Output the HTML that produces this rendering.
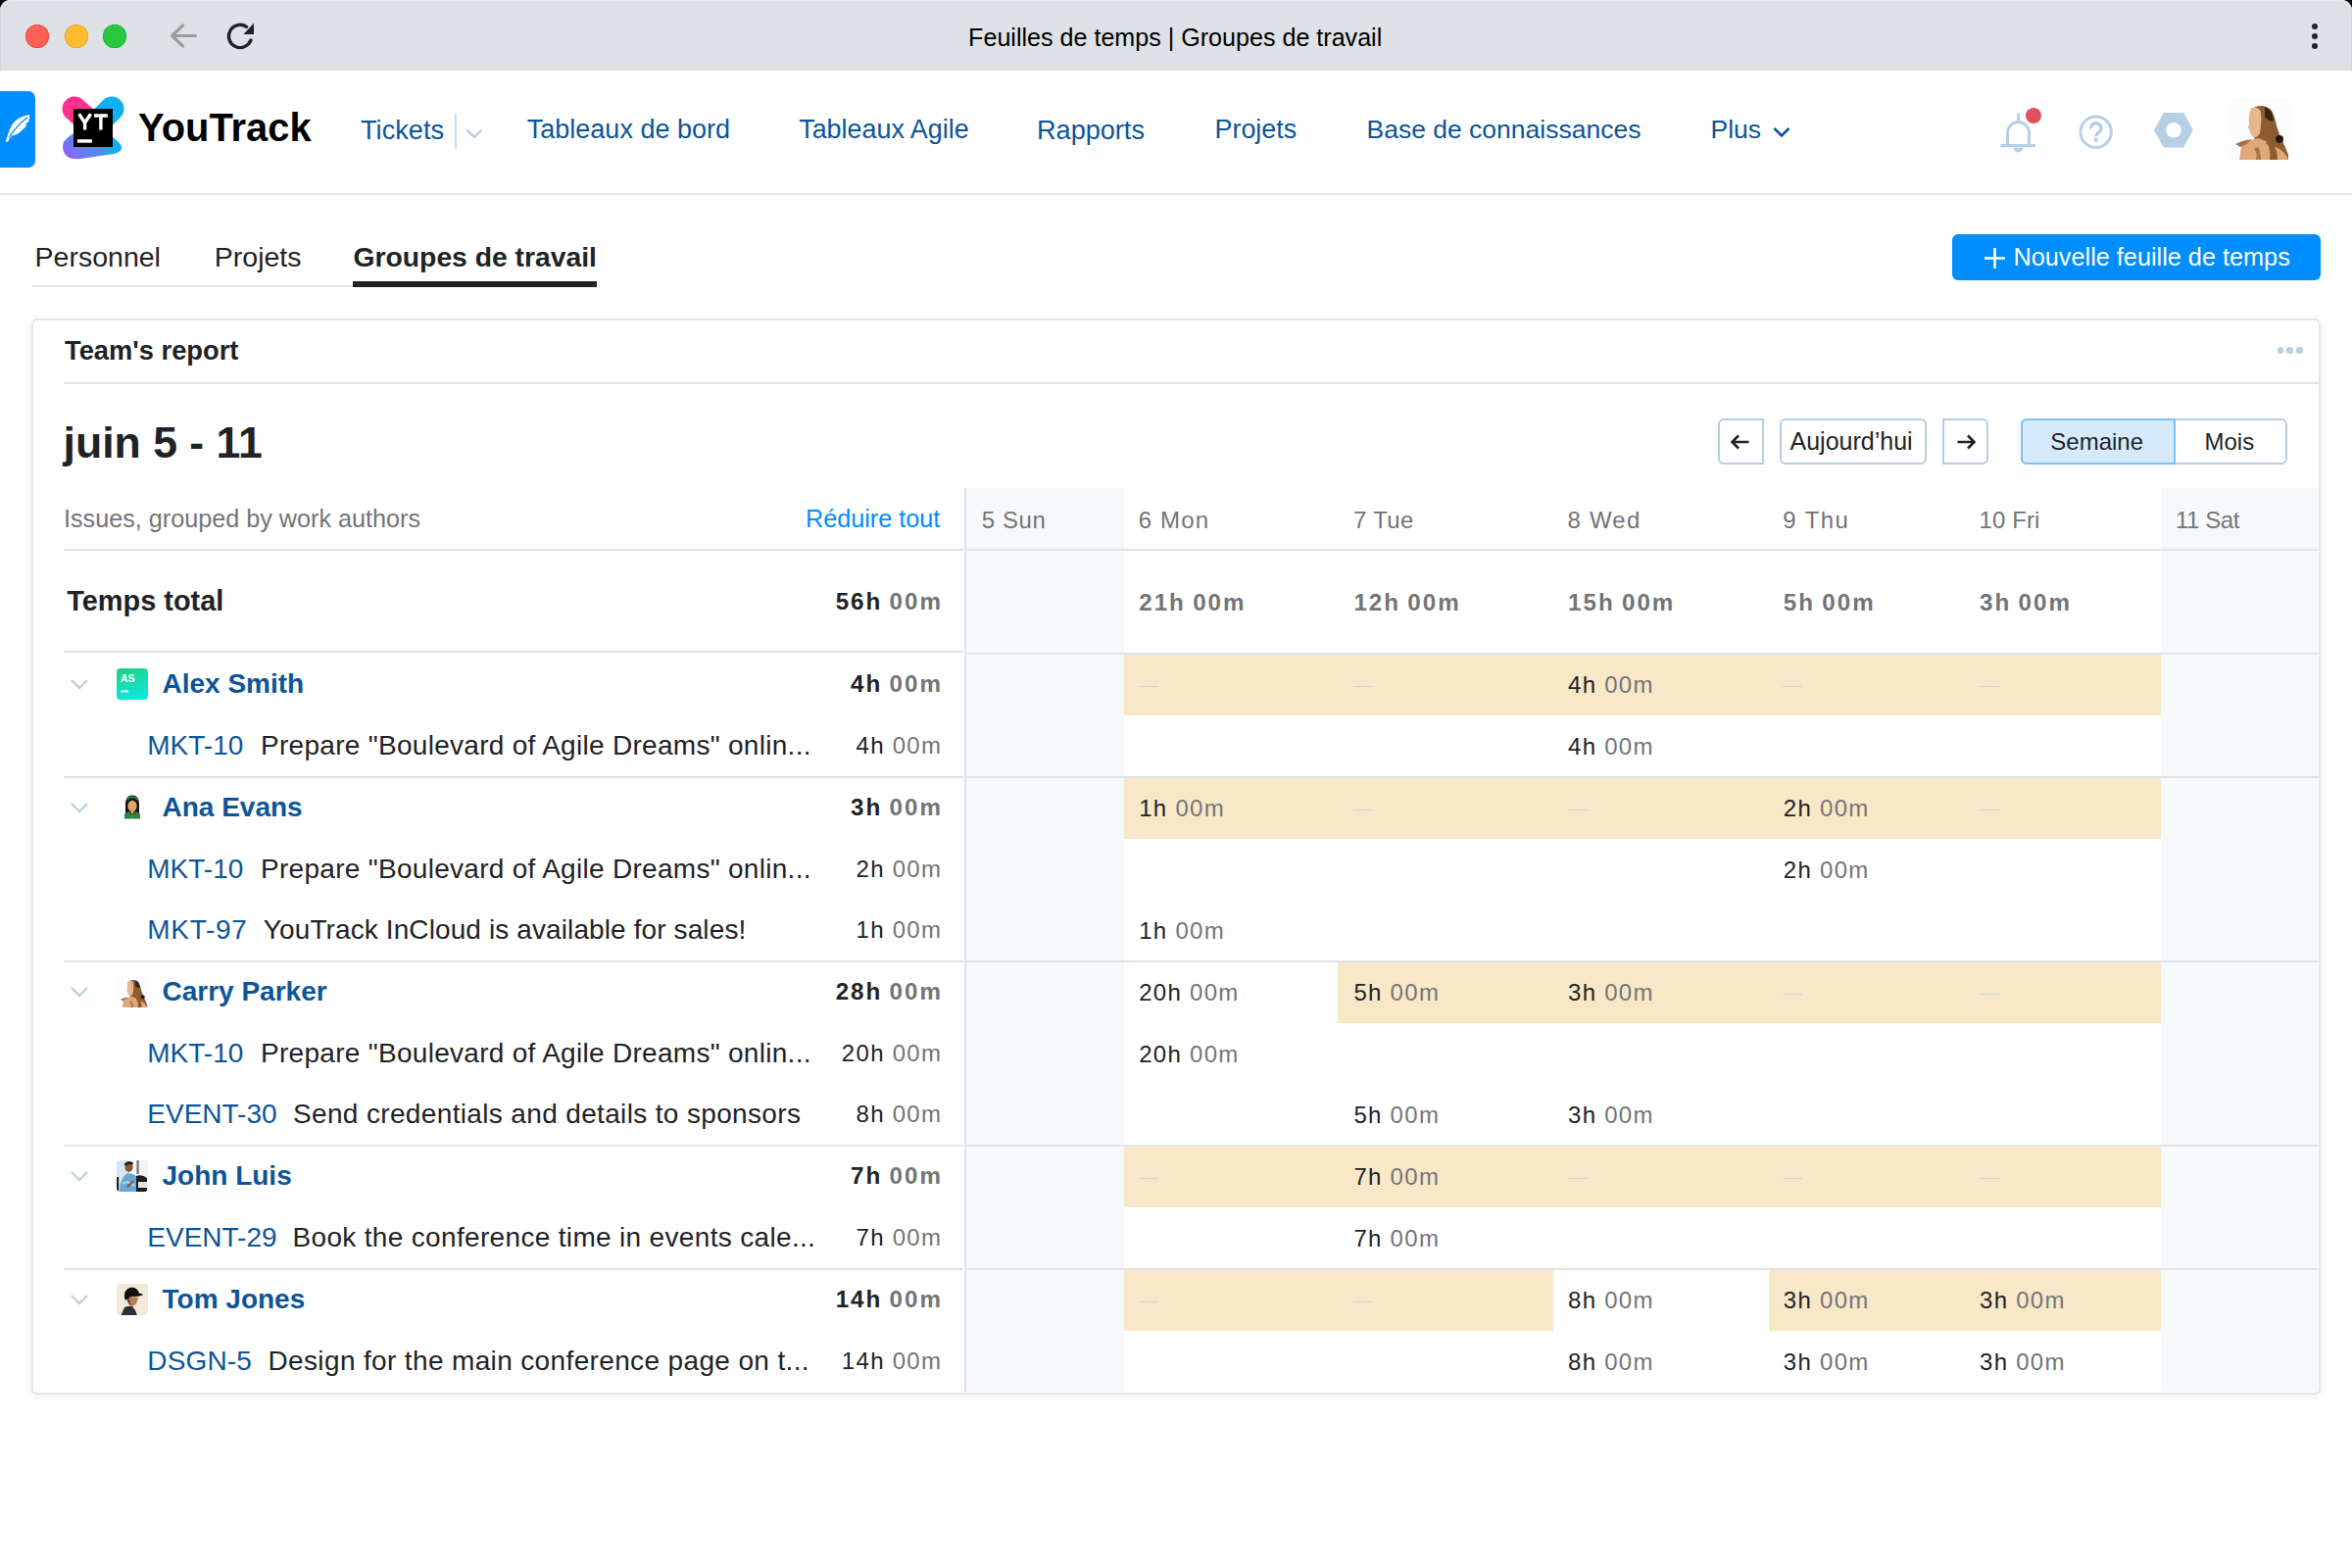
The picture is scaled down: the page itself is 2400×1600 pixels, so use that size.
<!DOCTYPE html>
<html><head><meta charset="utf-8"><title>Feuilles de temps | Groupes de travail</title>
<style>
html,body{margin:0;padding:0;width:2400px;height:1600px;overflow:hidden;background:#000;}
.t{position:absolute;white-space:nowrap;font-family:"Liberation Sans", sans-serif;}
.r{position:absolute;}
svg{display:block;}
</style></head><body>
<div class="r" style="left:0;top:0;width:2400px;height:80px;background:#dee1e6;border-radius:11px 11px 0 0;box-shadow:inset 0 1px 0 #e9eaee, inset 1px 0 0 #d5d6d9, inset -1px 0 0 #d5d6d9"></div>
<div class="r" style="left:0px;top:72px;width:2400px;height:1528px;background:#ffffff;"></div>
<div class="r" style="left:25.7px;top:24.7px;width:24.4px;height:24.4px;border-radius:50%;background:#fe5f57;box-shadow:inset 0 0 0 0.8px #e14640"></div>
<div class="r" style="left:65.6px;top:24.7px;width:24.4px;height:24.4px;border-radius:50%;background:#febc2e;box-shadow:inset 0 0 0 0.8px #dfa123"></div>
<div class="r" style="left:105.1px;top:24.7px;width:24.4px;height:24.4px;border-radius:50%;background:#28c840;box-shadow:inset 0 0 0 0.8px #1dad2b"></div>
<svg class="r" style="left:170px;top:20px" width="34" height="34" viewBox="0 0 34 34"><path d="M29.5 16.5H6.5M16.5 6L5.5 16.5L16.5 27" fill="none" stroke="#9b9c9e" stroke-width="3.2" stroke-linecap="round" stroke-linejoin="round"/></svg>
<svg class="r" style="left:226px;top:18px" width="40" height="40" viewBox="0 0 40 40"><path d="M29.9 23.1A11.6 11.6 0 1 1 25.5 9.3" fill="none" stroke="#1f2326" stroke-width="3.4" stroke-linecap="round"/><path d="M33 5.8V17H22.3Z" fill="#1f2326"/></svg>
<div class="t" style="left:1199.2px;top:26.0px;font-size:25.1px;line-height:25.1px;color:#000000;font-weight:400;transform:translateX(-50%);">Feuilles de temps | Groupes de travail</div>
<div class="r" style="left:2358.7px;top:23.6px;width:6.6px;height:6.6px;border-radius:50%;background:#1f2326"></div>
<div class="r" style="left:2358.7px;top:33.6px;width:6.6px;height:6.6px;border-radius:50%;background:#1f2326"></div>
<div class="r" style="left:2358.7px;top:43.6px;width:6.6px;height:6.6px;border-radius:50%;background:#1f2326"></div>
<div class="r" style="left:0px;top:197px;width:2400px;height:2px;background:#e3e7ec;"></div>
<div class="r" style="left:-8px;top:93px;width:44px;height:78px;border-radius:7px;background:#008eff"></div>
<svg class="r" style="left:4px;top:114px" width="30" height="34" viewBox="0 0 30 34"><path d="M26.1 3.2C18 4 11 8 8 14C6 18 4.5 21 3.5 25L1.8 30.2L3.6 31L7.9 24.6C10 24 12 23.5 13.9 22.8C18 20 21 17 23.4 13.3L21.6 12.7C23.5 11.5 24.8 10.5 25.2 10.3C26 8 26.3 5.5 26.1 3.2Z" fill="#fff"/><path d="M24.2 5.8Q14 13 5 26.5" fill="none" stroke="#008eff" stroke-width="1.3"/></svg>
<svg class="r" style="left:60px;top:96px" width="70" height="70" viewBox="0 0 70 70">
<defs><linearGradient id="lg1" x1="0" y1="1" x2="1" y2="0.3"><stop offset="0" stop-color="#9b5cff"/><stop offset="0.55" stop-color="#4b8cf5"/><stop offset="1" stop-color="#10b4f0"/></linearGradient></defs>
<path d="M16 15 L36 33" stroke="#ff318c" stroke-width="25" stroke-linecap="round"/>
<path d="M54 15 L36 33" stroke="#0fb1f3" stroke-width="25" stroke-linecap="round"/>
<path d="M44 34 L58 48 Q68 58 56 61 L22 66 Q6 68 4 55 Q3 47 14 41 L30 32 Z" fill="url(#lg1)"/>
<path d="M40 30 L62 50 Q68 57 58 60 L48 61 Z" fill="#0fb1f3"/>
<rect x="15" y="15" width="40" height="39" fill="#000"/>
<path d="M20.6 20.3L26.6 29.2M32.6 20.3L26.6 29.2V36.6M36 22H49.8M42.9 20.3V36.6" fill="none" stroke="#fff" stroke-width="3.4"/>
<rect x="19" y="46.2" width="15" height="3.5" fill="#fff"/>
</svg>
<div class="t" style="left:141.0px;top:111.2px;font-size:39.9px;line-height:39.9px;color:#000000;font-weight:700;">YouTrack</div>
<div class="t" style="left:368.0px;top:118.8px;font-size:27.2px;line-height:27.2px;color:#0d5597;font-weight:400;">Tickets</div>
<div class="r" style="left:464px;top:116px;width:2px;height:36px;background:#c9dbee;"></div>
<svg class="r" style="left:474px;top:128px" width="20" height="16" viewBox="0 0 20 16"><path d="M2.5 4.5L10 12L17.5 4.5" fill="none" stroke="#b1cbe5" stroke-width="2.2"/></svg>
<div class="t" style="left:537.8px;top:118.9px;font-size:27px;line-height:27px;color:#0d5597;font-weight:400;">Tableaux de bord</div>
<div class="t" style="left:815.2px;top:119.0px;font-size:26.9px;line-height:26.9px;color:#0d5597;font-weight:400;">Tableaux Agile</div>
<div class="t" style="left:1058.0px;top:118.9px;font-size:27.1px;line-height:27.1px;color:#0d5597;font-weight:400;">Rapports</div>
<div class="t" style="left:1239.5px;top:119.0px;font-size:26.9px;line-height:26.9px;color:#0d5597;font-weight:400;">Projets</div>
<div class="t" style="left:1394.5px;top:119.4px;font-size:26.5px;line-height:26.5px;color:#0d5597;font-weight:400;">Base de connaissances</div>
<div class="t" style="left:1745.5px;top:119.4px;font-size:26.5px;line-height:26.5px;color:#0d5597;font-weight:400;">Plus</div>
<svg class="r" style="left:1808px;top:126px" width="20" height="18" viewBox="0 0 20 18"><path d="M2.5 5L10 12.5L17.5 5" fill="none" stroke="#0d5597" stroke-width="2.6"/></svg>
<svg class="r" style="left:2036px;top:110px" width="50" height="50" viewBox="0 0 50 50">
<path d="M23.5 5.5V13" stroke="#b7cfe6" stroke-width="3"/>
<path d="M12.5 38.5V25.5A11 11 0 0 1 34.5 25.5V38.5" fill="none" stroke="#b7cfe6" stroke-width="3"/>
<path d="M5.5 38.5H41" stroke="#b7cfe6" stroke-width="3"/>
<path d="M18.5 40.5A5 5 0 0 0 28.5 40.5Z" fill="#b7cfe6"/>
</svg>
<div class="r" style="left:2067px;top:110px;width:16px;height:16px;border-radius:50%;background:#e0525e"></div>
<svg class="r" style="left:2118px;top:114px" width="42" height="42" viewBox="0 0 42 42">
<circle cx="20.7" cy="20.75" r="15.7" fill="none" stroke="#b7cfe6" stroke-width="2.9"/>
<path d="M15.5 17.3A5.2 5.2 0 1 1 24 20.9Q20.8 22.8 20.8 25.2" fill="none" stroke="#b7cfe6" stroke-width="3.3"/>
<rect x="18.9" y="26.8" width="3.8" height="3.8" fill="#b7cfe6"/>
</svg>
<svg class="r" style="left:2196px;top:113px" width="44" height="40" viewBox="0 0 44 40">
<path d="M11.8 2H32.2L41.8 19.7L32.2 37.4H11.8L2 19.7Z" fill="#b7cfe6"/>
<circle cx="22" cy="19.7" r="7.8" fill="#fff"/>
</svg>
<div class="r" style="left:2274px;top:100px;width:62px;height:63px"><svg width="62" height="63" viewBox="0 0 62 63"><rect width="62" height="63" rx="4" fill="#fbfcfd"/><path d="M22 14Q26 7 35 8Q44 9 47 20Q49 30 53 40Q58 50 61 58V63H30Z" fill="#8d5c31"/><path d="M37 9Q45 11 46 23Q41 25 37 19Z" fill="#3b2412"/><circle cx="52" cy="42" r="4" fill="#24160c"/><path d="M11 63L13 50Q20 43 30 41Q40 44 48 50Q58 54 61 63Z" fill="#dfa877"/><path d="M23 10Q30 8 33 14Q34 26 32 36Q29 41 25 40Q22 36 21 32Q19 30 21 27Q20 20 23 10Z" fill="#e9b78c"/><path d="M38 45Q44 52 42 63H50Q50 52 44 44Z" fill="#8d5c31"/><path d="M26 52Q30 56 28 63H33Q33 55 30 50Z" fill="#a87448"/><path d="M7 47Q15 43 24 42Q18 48 12 50Z" fill="#a57244"/></svg></div>
<div class="t" style="left:35.6px;top:248.1px;font-size:28.5px;line-height:28.5px;color:#1f2326;font-weight:400;">Personnel</div>
<div class="t" style="left:218.8px;top:248.1px;font-size:28.5px;line-height:28.5px;color:#1f2326;font-weight:400;">Projets</div>
<div class="t" style="left:360.5px;top:248.2px;font-size:28.3px;line-height:28.3px;color:#1f2326;font-weight:700;">Groupes de travail</div>
<div class="r" style="left:32px;top:291px;width:328px;height:2px;background:#e3e7ec;"></div>
<div class="r" style="left:360px;top:287px;width:249px;height:6px;background:#1f2326;"></div>
<div class="r" style="left:1992px;top:239px;width:376px;height:47px;border-radius:6px;background:#008eff"></div>
<svg class="r" style="left:2024px;top:252px" width="23" height="23" viewBox="0 0 23 23"><path d="M11.5 1V22M1 11.5H22" stroke="#fff" stroke-width="2.6"/></svg>
<div class="t" style="left:2054.5px;top:249.5px;font-size:25.27px;line-height:25.27px;color:#ffffff;font-weight:400;">Nouvelle feuille de temps</div>
<div class="r" style="left:32px;top:325px;width:2336px;height:1098px;border:2px solid #e1e6ec;border-radius:6px;background:#ffffff;box-sizing:border-box;box-shadow:0 2px 8px rgba(40,60,90,0.09)"></div>
<div class="t" style="left:66.0px;top:343.9px;font-size:27.3px;line-height:27.3px;color:#1f2326;font-weight:700;">Team's report</div>
<div class="r" style="left:2323.6px;top:354.2px;width:6.4px;height:6.4px;border-radius:50%;background:#b7cfe6"></div>
<div class="r" style="left:2333.4px;top:354.2px;width:6.4px;height:6.4px;border-radius:50%;background:#b7cfe6"></div>
<div class="r" style="left:2343.3px;top:354.2px;width:6.4px;height:6.4px;border-radius:50%;background:#b7cfe6"></div>
<div class="r" style="left:65px;top:390px;width:2301px;height:2px;background:#dfe4ea;"></div>
<div class="t" style="left:64.5px;top:430.3px;font-size:44.6px;line-height:44.6px;color:#1f2326;font-weight:700;">juin 5 - 11</div>
<div class="r" style="left:1753px;top:427px;width:47px;height:47px;border:2px solid #b7cde3;border-radius:6px 0 0 6px;box-sizing:border-box;background:#fff"></div>
<svg class="r" style="left:1764px;top:440px" width="24" height="22" viewBox="0 0 24 22"><path d="M20.5 11H4M10 4.5L3.5 11L10 17.5" fill="none" stroke="#1f2326" stroke-width="2.6"/></svg>
<div class="r" style="left:1816px;top:427px;width:150px;height:47px;border:2px solid #b7cde3;border-radius:6px;box-sizing:border-box;background:#fff"></div>
<div class="t" style="left:1826.5px;top:438.0px;font-size:25px;line-height:25px;color:#1f2326;font-weight:400;">Aujourd’hui</div>
<div class="r" style="left:1982px;top:427px;width:47px;height:47px;border:2px solid #b7cde3;border-radius:0 6px 6px 0;box-sizing:border-box;background:#fff"></div>
<svg class="r" style="left:1994px;top:440px" width="24" height="22" viewBox="0 0 24 22"><path d="M3.5 11H20M14 4.5L20.5 11L14 17.5" fill="none" stroke="#1f2326" stroke-width="2.6"/></svg>
<div class="r" style="left:2062px;top:427px;width:272px;height:47px;border:2px solid #b7cde3;border-radius:6px;box-sizing:border-box;background:#fff"></div>
<div class="r" style="left:2062px;top:427px;width:158px;height:47px;border:2px solid #7cc0fb;border-radius:6px 0 0 6px;box-sizing:border-box;background:#d5ebfd"></div>
<div class="t" style="left:2092.3px;top:438.9px;font-size:24px;line-height:24px;color:#1f2326;font-weight:400;">Semaine</div>
<div class="t" style="left:2249.5px;top:438.9px;font-size:24px;line-height:24px;color:#1f2326;font-weight:400;">Mois</div>
<div class="r" style="left:986px;top:498px;width:161px;height:922px;background:#f7f8fa;"></div>
<div class="r" style="left:2205px;top:498px;width:160px;height:922px;background:#f7f8fa;"></div>
<div class="r" style="left:1147px;top:668px;width:1058px;height:62px;background:#f9e8c8;"></div>
<div class="r" style="left:1147px;top:794px;width:1058px;height:62px;background:#f9e8c8;"></div>
<div class="r" style="left:1365px;top:982px;width:840px;height:62px;background:#f9e8c8;"></div>
<div class="r" style="left:1147px;top:1170px;width:1058px;height:62px;background:#f9e8c8;"></div>
<div class="r" style="left:1147px;top:1296px;width:438px;height:62px;background:#f9e8c8;"></div>
<div class="r" style="left:1805px;top:1296px;width:400px;height:62px;background:#f9e8c8;"></div>
<div class="r" style="left:984px;top:498px;width:2px;height:922px;background:#dfe4ea;"></div>
<div class="r" style="left:65px;top:560px;width:918px;height:2px;background:#dfe4ea;"></div>
<div class="r" style="left:986px;top:560px;width:1380px;height:2px;background:#dfe4ea;"></div>
<div class="r" style="left:65px;top:792px;width:918px;height:2px;background:#dfe4ea;"></div>
<div class="r" style="left:986px;top:792px;width:1380px;height:2px;background:#dfe4ea;"></div>
<div class="r" style="left:65px;top:980px;width:918px;height:2px;background:#dfe4ea;"></div>
<div class="r" style="left:986px;top:980px;width:1380px;height:2px;background:#dfe4ea;"></div>
<div class="r" style="left:65px;top:1168px;width:918px;height:2px;background:#dfe4ea;"></div>
<div class="r" style="left:986px;top:1168px;width:1380px;height:2px;background:#dfe4ea;"></div>
<div class="r" style="left:65px;top:1294px;width:918px;height:2px;background:#dfe4ea;"></div>
<div class="r" style="left:986px;top:1294px;width:1380px;height:2px;background:#dfe4ea;"></div>
<div class="r" style="left:65px;top:664px;width:918px;height:2px;background:#dfe4ea;"></div>
<div class="r" style="left:986px;top:666px;width:1380px;height:2px;background:#dfe4ea;"></div>
<div class="t" style="left:65.0px;top:516.5px;font-size:25.2px;line-height:25.2px;color:#737577;font-weight:400;">Issues, grouped by work authors</div>
<div class="t" style="right:1440.8px;top:516.5px;font-size:25.2px;line-height:25.2px;color:#008eff;font-weight:400;">Réduire tout</div>
<div class="t" style="left:1001.8px;top:518.7px;font-size:24px;line-height:24px;color:#737577;font-weight:400;letter-spacing:0.6px;">5 Sun</div>
<div class="t" style="left:1161.7px;top:518.7px;font-size:24px;line-height:24px;color:#737577;font-weight:400;letter-spacing:1.2px;">6 Mon</div>
<div class="t" style="left:1380.9px;top:518.7px;font-size:24px;line-height:24px;color:#737577;font-weight:400;letter-spacing:0.35px;">7 Tue</div>
<div class="t" style="left:1599.5px;top:518.7px;font-size:24px;line-height:24px;color:#737577;font-weight:400;letter-spacing:1.2px;">8 Wed</div>
<div class="t" style="left:1819.3px;top:518.7px;font-size:24px;line-height:24px;color:#737577;font-weight:400;letter-spacing:1.4px;">9 Thu</div>
<div class="t" style="left:2019.5px;top:518.7px;font-size:24px;line-height:24px;color:#737577;font-weight:400;letter-spacing:0.1px;">10 Fri</div>
<div class="t" style="left:2220.0px;top:518.7px;font-size:24px;line-height:24px;color:#737577;font-weight:400;letter-spacing:-0.45px;">11 Sat</div>
<div class="t" style="left:68.3px;top:598.8px;font-size:28.9px;line-height:28.9px;color:#1f2326;font-weight:700;">Temps total</div>
<div class="t" style="right:1438.0px;top:601.6px;font-size:24.2px;line-height:24.2px;color:#1f2326;font-weight:700;letter-spacing:2.0px;"><span style="color:#1f2326">56h</span><span style="color:#737577;margin-left:0.3em">00m</span></div>
<div class="t" style="left:1162.2px;top:602.9px;font-size:24.2px;line-height:24.2px;color:#1f2326;font-weight:700;letter-spacing:2.0px;"><span style="color:#737577">21h</span><span style="color:#737577;margin-left:0.3em">00m</span></div>
<div class="t" style="left:1381.4px;top:602.9px;font-size:24.2px;line-height:24.2px;color:#1f2326;font-weight:700;letter-spacing:2.0px;"><span style="color:#737577">12h</span><span style="color:#737577;margin-left:0.3em">00m</span></div>
<div class="t" style="left:1600.0px;top:602.9px;font-size:24.2px;line-height:24.2px;color:#1f2326;font-weight:700;letter-spacing:2.0px;"><span style="color:#737577">15h</span><span style="color:#737577;margin-left:0.3em">00m</span></div>
<div class="t" style="left:1819.8px;top:602.9px;font-size:24.2px;line-height:24.2px;color:#1f2326;font-weight:700;letter-spacing:2.0px;"><span style="color:#737577">5h</span><span style="color:#737577;margin-left:0.3em">00m</span></div>
<div class="t" style="left:2020.0px;top:602.9px;font-size:24.2px;line-height:24.2px;color:#1f2326;font-weight:700;letter-spacing:2.0px;"><span style="color:#737577">3h</span><span style="color:#737577;margin-left:0.3em">00m</span></div>
<svg class="r" style="left:70px;top:690.0px" width="22" height="16" viewBox="0 0 22 16"><path d="M3 4L11 12L19 4" fill="none" stroke="#b9d0e5" stroke-width="2.3"/></svg>
<div class="r" style="left:119px;top:681.7px;width:32px;height:32px"><svg width="32" height="32" viewBox="0 0 32 32"><defs><linearGradient id="gas" x1="0" y1="0" x2="0.3" y2="1"><stop offset="0" stop-color="#21d07a"/><stop offset="1" stop-color="#0ce8dc"/></linearGradient></defs><rect width="32" height="32" rx="4" fill="url(#gas)"/><text x="4" y="13.5" font-family="Liberation Sans" font-weight="700" font-size="10.5" fill="#fff">AS</text><rect x="4.3" y="22.4" width="7.5" height="2" fill="#fff"/></svg></div>
<div class="t" style="left:165.5px;top:683.8px;font-size:28px;line-height:28px;color:#0d5597;font-weight:700;">Alex Smith</div>
<div class="t" style="right:1438.0px;top:686.1px;font-size:24.2px;line-height:24.2px;color:#1f2326;font-weight:700;letter-spacing:2.0px;"><span style="color:#1f2326">4h</span><span style="color:#737577;margin-left:0.3em">00m</span></div>
<div class="r" style="left:1161.7px;top:699.5px;width:20px;height:1.6px;background:#cfd6df;"></div>
<div class="r" style="left:1380.9px;top:699.5px;width:20px;height:1.6px;background:#cfd6df;"></div>
<div class="t" style="left:1600.0px;top:686.9px;font-size:24px;line-height:24px;color:#1f2326;font-weight:400;letter-spacing:1.3px;"><span style="color:#1f2326">4h</span><span style="color:#737577;margin-left:0.33em">00m</span></div>
<div class="r" style="left:1819.3px;top:699.5px;width:20px;height:1.6px;background:#cfd6df;"></div>
<div class="r" style="left:2019.5px;top:699.5px;width:20px;height:1.6px;background:#cfd6df;"></div>
<div class="t" style="left:150.3px;top:746.5px;font-size:28px;line-height:28px;color:#0d5597;font-weight:400;">MKT-10</div>
<div class="t" style="left:266.0px;top:746.5px;font-size:28px;line-height:28px;color:#1f2326;font-weight:400;letter-spacing:0.29px;">Prepare "Boulevard of Agile Dreams" onlin...</div>
<div class="t" style="right:1438.7px;top:749.1px;font-size:24px;line-height:24px;color:#1f2326;font-weight:400;letter-spacing:1.3px;"><span style="color:#1f2326">4h</span><span style="color:#737577;margin-left:0.33em">00m</span></div>
<div class="t" style="left:1600.0px;top:749.9px;font-size:24px;line-height:24px;color:#1f2326;font-weight:400;letter-spacing:1.3px;"><span style="color:#1f2326">4h</span><span style="color:#737577;margin-left:0.33em">00m</span></div>
<svg class="r" style="left:70px;top:816.0px" width="22" height="16" viewBox="0 0 22 16"><path d="M3 4L11 12L19 4" fill="none" stroke="#b9d0e5" stroke-width="2.3"/></svg>
<div class="r" style="left:119px;top:807.7px;width:32px;height:32px"><svg width="32" height="32" viewBox="0 0 32 32"><path d="M9 28V12Q9 3.5 16 3.5Q23 3.5 23 12V24H9Z" fill="#141414"/><path d="M10.3 8Q16 2.5 21.7 8" stroke="#2f8a3a" stroke-width="1.8" fill="none"/><ellipse cx="16" cy="14.5" rx="4.6" ry="5.8" fill="#e7a66c"/><path d="M13.5 18L16 24L18.5 18Z" fill="#e7a66c"/><path d="M8 27.5V22.5Q10 20.5 13 20L16 25L19 20Q22 20.5 24 22.5V27.5Z" fill="#2c8538"/><circle cx="16" cy="17.6" r="0.9" fill="#e0566a"/></svg></div>
<div class="t" style="left:165.5px;top:809.8px;font-size:28px;line-height:28px;color:#0d5597;font-weight:700;">Ana Evans</div>
<div class="t" style="right:1438.0px;top:812.1px;font-size:24.2px;line-height:24.2px;color:#1f2326;font-weight:700;letter-spacing:2.0px;"><span style="color:#1f2326">3h</span><span style="color:#737577;margin-left:0.3em">00m</span></div>
<div class="t" style="left:1162.2px;top:812.9px;font-size:24px;line-height:24px;color:#1f2326;font-weight:400;letter-spacing:1.3px;"><span style="color:#1f2326">1h</span><span style="color:#737577;margin-left:0.33em">00m</span></div>
<div class="r" style="left:1380.9px;top:825.5px;width:20px;height:1.6px;background:#cfd6df;"></div>
<div class="r" style="left:1599.5px;top:825.5px;width:20px;height:1.6px;background:#cfd6df;"></div>
<div class="t" style="left:1819.8px;top:812.9px;font-size:24px;line-height:24px;color:#1f2326;font-weight:400;letter-spacing:1.3px;"><span style="color:#1f2326">2h</span><span style="color:#737577;margin-left:0.33em">00m</span></div>
<div class="r" style="left:2019.5px;top:825.5px;width:20px;height:1.6px;background:#cfd6df;"></div>
<div class="t" style="left:150.3px;top:872.5px;font-size:28px;line-height:28px;color:#0d5597;font-weight:400;">MKT-10</div>
<div class="t" style="left:266.0px;top:872.5px;font-size:28px;line-height:28px;color:#1f2326;font-weight:400;letter-spacing:0.29px;">Prepare "Boulevard of Agile Dreams" onlin...</div>
<div class="t" style="right:1438.7px;top:875.1px;font-size:24px;line-height:24px;color:#1f2326;font-weight:400;letter-spacing:1.3px;"><span style="color:#1f2326">2h</span><span style="color:#737577;margin-left:0.33em">00m</span></div>
<div class="t" style="left:1819.8px;top:875.9px;font-size:24px;line-height:24px;color:#1f2326;font-weight:400;letter-spacing:1.3px;"><span style="color:#1f2326">2h</span><span style="color:#737577;margin-left:0.33em">00m</span></div>
<div class="t" style="left:150.3px;top:934.5px;font-size:28px;line-height:28px;color:#0d5597;font-weight:400;letter-spacing:0.7px;">MKT-97</div>
<div class="t" style="left:268.8px;top:934.5px;font-size:28px;line-height:28px;color:#1f2326;font-weight:400;letter-spacing:0.11px;">YouTrack InCloud is available for sales!</div>
<div class="t" style="right:1438.7px;top:937.1px;font-size:24px;line-height:24px;color:#1f2326;font-weight:400;letter-spacing:1.3px;"><span style="color:#1f2326">1h</span><span style="color:#737577;margin-left:0.33em">00m</span></div>
<div class="t" style="left:1162.2px;top:937.9px;font-size:24px;line-height:24px;color:#1f2326;font-weight:400;letter-spacing:1.3px;"><span style="color:#1f2326">1h</span><span style="color:#737577;margin-left:0.33em">00m</span></div>
<svg class="r" style="left:70px;top:1004.0px" width="22" height="16" viewBox="0 0 22 16"><path d="M3 4L11 12L19 4" fill="none" stroke="#b9d0e5" stroke-width="2.3"/></svg>
<div class="r" style="left:119px;top:995.7px;width:32px;height:32px"><svg width="32" height="32" viewBox="0 0 62 63"><rect width="62" height="63" rx="4" fill="#fbfcfd"/><path d="M22 14Q26 7 35 8Q44 9 47 20Q49 30 53 40Q58 50 61 58V63H30Z" fill="#8d5c31"/><path d="M37 9Q45 11 46 23Q41 25 37 19Z" fill="#3b2412"/><circle cx="52" cy="42" r="4" fill="#24160c"/><path d="M11 63L13 50Q20 43 30 41Q40 44 48 50Q58 54 61 63Z" fill="#dfa877"/><path d="M23 10Q30 8 33 14Q34 26 32 36Q29 41 25 40Q22 36 21 32Q19 30 21 27Q20 20 23 10Z" fill="#e9b78c"/><path d="M38 45Q44 52 42 63H50Q50 52 44 44Z" fill="#8d5c31"/><path d="M26 52Q30 56 28 63H33Q33 55 30 50Z" fill="#a87448"/><path d="M7 47Q15 43 24 42Q18 48 12 50Z" fill="#a57244"/></svg></div>
<div class="t" style="left:165.5px;top:997.8px;font-size:28px;line-height:28px;color:#0d5597;font-weight:700;">Carry Parker</div>
<div class="t" style="right:1438.0px;top:1000.1px;font-size:24.2px;line-height:24.2px;color:#1f2326;font-weight:700;letter-spacing:2.0px;"><span style="color:#1f2326">28h</span><span style="color:#737577;margin-left:0.3em">00m</span></div>
<div class="t" style="left:1162.2px;top:1000.9px;font-size:24px;line-height:24px;color:#1f2326;font-weight:400;letter-spacing:1.3px;"><span style="color:#1f2326">20h</span><span style="color:#737577;margin-left:0.33em">00m</span></div>
<div class="t" style="left:1381.4px;top:1000.9px;font-size:24px;line-height:24px;color:#1f2326;font-weight:400;letter-spacing:1.3px;"><span style="color:#1f2326">5h</span><span style="color:#737577;margin-left:0.33em">00m</span></div>
<div class="t" style="left:1600.0px;top:1000.9px;font-size:24px;line-height:24px;color:#1f2326;font-weight:400;letter-spacing:1.3px;"><span style="color:#1f2326">3h</span><span style="color:#737577;margin-left:0.33em">00m</span></div>
<div class="r" style="left:1819.3px;top:1013.5px;width:20px;height:1.6px;background:#cfd6df;"></div>
<div class="r" style="left:2019.5px;top:1013.5px;width:20px;height:1.6px;background:#cfd6df;"></div>
<div class="t" style="left:150.3px;top:1060.5px;font-size:28px;line-height:28px;color:#0d5597;font-weight:400;">MKT-10</div>
<div class="t" style="left:266.0px;top:1060.5px;font-size:28px;line-height:28px;color:#1f2326;font-weight:400;letter-spacing:0.29px;">Prepare "Boulevard of Agile Dreams" onlin...</div>
<div class="t" style="right:1438.7px;top:1063.1px;font-size:24px;line-height:24px;color:#1f2326;font-weight:400;letter-spacing:1.3px;"><span style="color:#1f2326">20h</span><span style="color:#737577;margin-left:0.33em">00m</span></div>
<div class="t" style="left:1162.2px;top:1063.9px;font-size:24px;line-height:24px;color:#1f2326;font-weight:400;letter-spacing:1.3px;"><span style="color:#1f2326">20h</span><span style="color:#737577;margin-left:0.33em">00m</span></div>
<div class="t" style="left:150.3px;top:1122.5px;font-size:28px;line-height:28px;color:#0d5597;font-weight:400;">EVENT-30</div>
<div class="t" style="left:299.0px;top:1122.5px;font-size:28px;line-height:28px;color:#1f2326;font-weight:400;letter-spacing:0.35px;">Send credentials and details to sponsors</div>
<div class="t" style="right:1438.7px;top:1125.1px;font-size:24px;line-height:24px;color:#1f2326;font-weight:400;letter-spacing:1.3px;"><span style="color:#1f2326">8h</span><span style="color:#737577;margin-left:0.33em">00m</span></div>
<div class="t" style="left:1381.4px;top:1125.9px;font-size:24px;line-height:24px;color:#1f2326;font-weight:400;letter-spacing:1.3px;"><span style="color:#1f2326">5h</span><span style="color:#737577;margin-left:0.33em">00m</span></div>
<div class="t" style="left:1600.0px;top:1125.9px;font-size:24px;line-height:24px;color:#1f2326;font-weight:400;letter-spacing:1.3px;"><span style="color:#1f2326">3h</span><span style="color:#737577;margin-left:0.33em">00m</span></div>
<svg class="r" style="left:70px;top:1192.0px" width="22" height="16" viewBox="0 0 22 16"><path d="M3 4L11 12L19 4" fill="none" stroke="#b9d0e5" stroke-width="2.3"/></svg>
<div class="r" style="left:119px;top:1183.7px;width:32px;height:32px"><svg width="32" height="32" viewBox="0 0 32 32"><defs><clipPath id="cjl"><rect width="32" height="32" rx="4"/></clipPath></defs><g clip-path="url(#cjl)"><rect width="32" height="32" fill="#f3f6f9"/><rect x="0" y="0" width="12" height="32" fill="#d6e6f3"/><rect x="20.5" y="0" width="2.2" height="14" fill="#6d7278"/><path d="M3 32Q3 18 11 13Q19 13 23 20L22 32Z" fill="#67a8d4"/><path d="M6 24Q12 20 18 26" stroke="#a9d3ee" stroke-width="2" fill="none"/><ellipse cx="12.5" cy="7" rx="4" ry="5" fill="#8a5530"/><path d="M8.5 5Q12 0.5 16.5 4" stroke="#1b1b1b" stroke-width="2.6" fill="none"/><path d="M11 27L17 21" stroke="#8a5530" stroke-width="2.2"/><path d="M20 16Q26 14 31 18V32H20Z" fill="#1c1f22"/><rect x="22" y="22" width="9" height="6" fill="#e2e4e6"/><rect x="0" y="17" width="2.2" height="15" fill="#222"/></g></svg></div>
<div class="t" style="left:165.5px;top:1185.8px;font-size:28px;line-height:28px;color:#0d5597;font-weight:700;">John Luis</div>
<div class="t" style="right:1438.0px;top:1188.1px;font-size:24.2px;line-height:24.2px;color:#1f2326;font-weight:700;letter-spacing:2.0px;"><span style="color:#1f2326">7h</span><span style="color:#737577;margin-left:0.3em">00m</span></div>
<div class="r" style="left:1161.7px;top:1201.5px;width:20px;height:1.6px;background:#cfd6df;"></div>
<div class="t" style="left:1381.4px;top:1188.9px;font-size:24px;line-height:24px;color:#1f2326;font-weight:400;letter-spacing:1.3px;"><span style="color:#1f2326">7h</span><span style="color:#737577;margin-left:0.33em">00m</span></div>
<div class="r" style="left:1599.5px;top:1201.5px;width:20px;height:1.6px;background:#cfd6df;"></div>
<div class="r" style="left:1819.3px;top:1201.5px;width:20px;height:1.6px;background:#cfd6df;"></div>
<div class="r" style="left:2019.5px;top:1201.5px;width:20px;height:1.6px;background:#cfd6df;"></div>
<div class="t" style="left:150.3px;top:1248.5px;font-size:28px;line-height:28px;color:#0d5597;font-weight:400;">EVENT-29</div>
<div class="t" style="left:298.5px;top:1248.5px;font-size:28px;line-height:28px;color:#1f2326;font-weight:400;letter-spacing:0.33px;">Book the conference time in events cale...</div>
<div class="t" style="right:1438.7px;top:1251.1px;font-size:24px;line-height:24px;color:#1f2326;font-weight:400;letter-spacing:1.3px;"><span style="color:#1f2326">7h</span><span style="color:#737577;margin-left:0.33em">00m</span></div>
<div class="t" style="left:1381.4px;top:1251.9px;font-size:24px;line-height:24px;color:#1f2326;font-weight:400;letter-spacing:1.3px;"><span style="color:#1f2326">7h</span><span style="color:#737577;margin-left:0.33em">00m</span></div>
<svg class="r" style="left:70px;top:1318.0px" width="22" height="16" viewBox="0 0 22 16"><path d="M3 4L11 12L19 4" fill="none" stroke="#b9d0e5" stroke-width="2.3"/></svg>
<div class="r" style="left:119px;top:1309.7px;width:32px;height:32px"><svg width="32" height="32" viewBox="0 0 32 32"><rect width="32" height="32" rx="4" fill="#f2e9d8"/><path d="M4.5 32L8 24Q13 22 16 23Q19 26 21 32Z" fill="#2a2f34"/><path d="M10.5 12Q11 22 16 23Q21 22 22 14Z" fill="#b9845a"/><path d="M10.5 14Q11 21 15 22Q13 18 13 14Z" fill="#6e4424"/><path d="M8 15Q7 6 14 3.8Q21 3 23 9.5Q26 10 27 11.5Q22 13.5 17 12.8Q12 13 10 17Z" fill="#111"/></svg></div>
<div class="t" style="left:165.5px;top:1311.8px;font-size:28px;line-height:28px;color:#0d5597;font-weight:700;">Tom Jones</div>
<div class="t" style="right:1438.0px;top:1314.1px;font-size:24.2px;line-height:24.2px;color:#1f2326;font-weight:700;letter-spacing:2.0px;"><span style="color:#1f2326">14h</span><span style="color:#737577;margin-left:0.3em">00m</span></div>
<div class="r" style="left:1161.7px;top:1327.5px;width:20px;height:1.6px;background:#cfd6df;"></div>
<div class="r" style="left:1380.9px;top:1327.5px;width:20px;height:1.6px;background:#cfd6df;"></div>
<div class="t" style="left:1600.0px;top:1314.9px;font-size:24px;line-height:24px;color:#1f2326;font-weight:400;letter-spacing:1.3px;"><span style="color:#1f2326">8h</span><span style="color:#737577;margin-left:0.33em">00m</span></div>
<div class="t" style="left:1819.8px;top:1314.9px;font-size:24px;line-height:24px;color:#1f2326;font-weight:400;letter-spacing:1.3px;"><span style="color:#1f2326">3h</span><span style="color:#737577;margin-left:0.33em">00m</span></div>
<div class="t" style="left:2020.0px;top:1314.9px;font-size:24px;line-height:24px;color:#1f2326;font-weight:400;letter-spacing:1.3px;"><span style="color:#1f2326">3h</span><span style="color:#737577;margin-left:0.33em">00m</span></div>
<div class="t" style="left:150.3px;top:1374.5px;font-size:28px;line-height:28px;color:#0d5597;font-weight:400;letter-spacing:0.15px;">DSGN-5</div>
<div class="t" style="left:273.5px;top:1374.5px;font-size:28px;line-height:28px;color:#1f2326;font-weight:400;letter-spacing:0.36px;">Design for the main conference page on t...</div>
<div class="t" style="right:1438.7px;top:1377.1px;font-size:24px;line-height:24px;color:#1f2326;font-weight:400;letter-spacing:1.3px;"><span style="color:#1f2326">14h</span><span style="color:#737577;margin-left:0.33em">00m</span></div>
<div class="t" style="left:1600.0px;top:1377.9px;font-size:24px;line-height:24px;color:#1f2326;font-weight:400;letter-spacing:1.3px;"><span style="color:#1f2326">8h</span><span style="color:#737577;margin-left:0.33em">00m</span></div>
<div class="t" style="left:1819.8px;top:1377.9px;font-size:24px;line-height:24px;color:#1f2326;font-weight:400;letter-spacing:1.3px;"><span style="color:#1f2326">3h</span><span style="color:#737577;margin-left:0.33em">00m</span></div>
<div class="t" style="left:2020.0px;top:1377.9px;font-size:24px;line-height:24px;color:#1f2326;font-weight:400;letter-spacing:1.3px;"><span style="color:#1f2326">3h</span><span style="color:#737577;margin-left:0.33em">00m</span></div>
</body></html>
